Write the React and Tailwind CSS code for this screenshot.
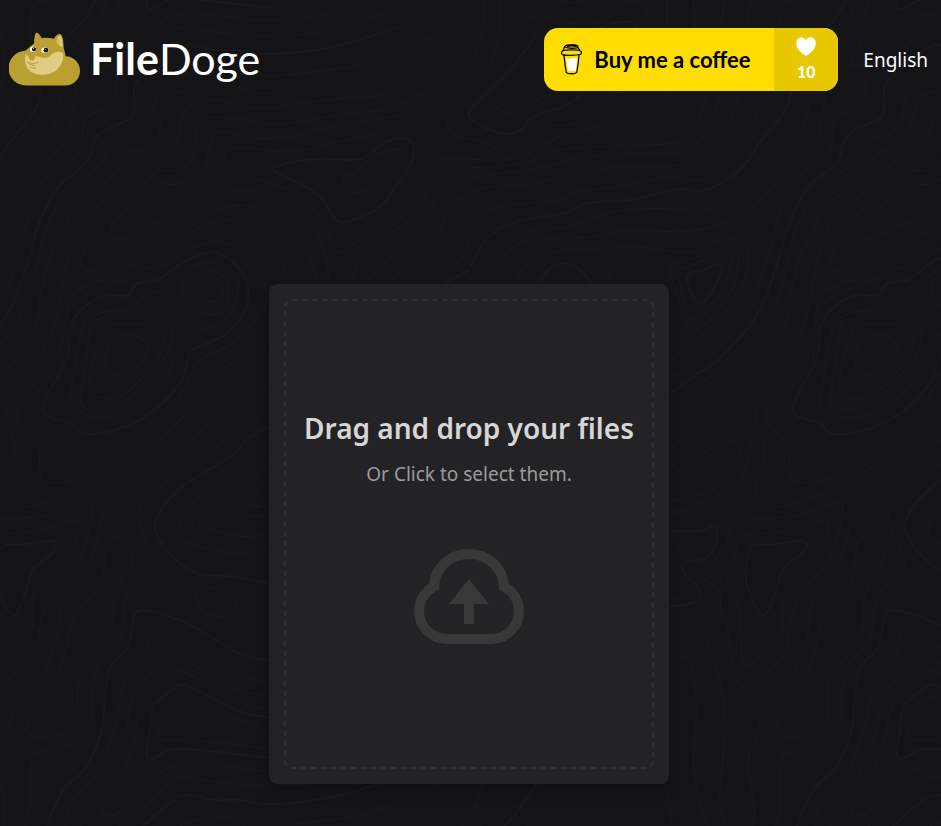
import React, { useState } from 'react';

// Contour lines, grouped by the area of the 750px tile they belong to.
// Points are in thirds of a pixel, a leading "*" means a heavier line and
// a trailing "z" closes the shape.
const areas = [
  {
    x: 0,
    y: 90,
    lines: [
      '55,0 30,50 0,120',
      '*125,0 115,40 85,90 30,155 0,205',
      '184,0 172,70 145,140 90,210 0,300',
      '228,0 215,80 195,160 105,240 60,300 0,363',
      '346,0 348,20 330,45 265,80 248,110 245,165 215,210 150,255 110,300 85,380 65,460 30,570',
      '*402,0 402,60 385,88 305,125 280,160 265,210 230,245 190,275 150,330 110,420 85,510 65,570',
      '485,0 465,30 455,85 425,130 355,148 325,180 300,225 215,295 170,350 130,440 102,570',
      '570,0 515,18 490,70 470,150 430,178 385,187 365,220 330,265 230,350 185,430 150,500 132,570',
      '1190,0 1120,20 1020,25 880,42 800,55 730,48 640,28 580,40 550,75 530,160 500,190 430,215 400,250 370,285 300,340 240,400 210,480 190,570',
      '1290,0 1200,45 1140,62 1040,70 900,95 820,103 740,90 640,82 600,95 588,130 582,190 560,230 530,242 475,242 440,275 330,365 275,440 245,500 242,530 262,542 320,525 450,460 570,410 640,365 720,346 790,360 860,405 920,480 945,560 947,600',
      '1340,0 1240,65 1120,90 970,115 880,140 770,145 730,138 680,125 645,132 628,170 615,240 590,258 530,283 478,282 440,315 350,385 332,420 340,443 370,447 440,412 530,375 640,320 720,300 780,312 880,360 940,415 975,490 990,600',
      '1370,0 1270,65 1170,120 1060,145 980,162 900,183 840,185 760,175 700,172 675,185 680,220 715,260 780,272 860,295 920,330 970,400 1000,465 1025,487 1060,462 1200,385 1230,345 1260,270 1320,212 1410,207',
      '*820,240 870,217 960,207 1080,207 1150,160 1200,143 1240,165 1230,230 1180,300 1140,350 1060,390 1010,390 960,320 900,280 z',
      '1060,250 1120,202 1190,179 1210,190 1180,245 1130,288 1060,308 1030,285 1035,257 z',
      '240,600 350,545 480,485 600,415 680,391 740,405 810,455 850,520 860,600',
      '285,570 365,572 430,540 500,522 580,472 650,455 710,475 770,540 785,570',
      '*395,600 415,577 470,572 560,510 640,487 690,510 730,550 740,570',
      '525,570 560,540 625,514 680,535 715,570',
      '550,570 575,555 630,543 670,555 680,570',
      '595,570 630,560 660,570',
      '1050,600 1080,510 1130,455 1210,405 1260,350 1310,270 1410,237',
      '1090,600 1140,530 1230,460 1280,380 1330,300 1410,267',
      '1150,600 1210,540 1300,460 1330,390 1360,340 1410,312',
      '1260,582 1370,520 1400,470 1410,430',
      '*1330,582 1410,540',
      '1410,18 1350,65 1342,105 1370,140 1410,147',
      '720,-5 770,10 830,8 870,-5',
    ],
  },
  {
    x: 470,
    y: 0,
    lines: [
      '40,0 40,60 30,130 0,195 -60,270',
      '90,0 88,90 60,190 0,260',
      '*340,275 290,315 190,350 160,385 120,402 60,390 0,355 5,325 60,270 130,200 200,100',
      '260,270 200,300 150,340 110,340 75,315 90,290 180,220',
      '0,415 40,425 90,450 150,440 200,405 240,380 310,370 380,330 410,290 450,275',
      '0,478 90,480 170,460 270,410 400,370 500,320 560,300 600,275',
      '0,503 80,500 160,490 270,450 380,440 520,435 620,425 680,370 712,275',
      '0,535 90,520 200,505 320,475 440,462 620,460 680,430 720,380 755,275',
      '0,577 60,560 180,553 300,525 460,500 620,497 680,485 740,440 780,360 808,275',
      '0,690 40,640 120,615 270,600 320,575 440,560 580,532 690,538 760,500 800,450 840,390',
      '*0,800 40,730 100,680 190,655 280,640 360,608 480,600 620,568 700,572 790,525 840,475',
      '0,860 60,770 130,710 220,685 300,680 430,635 560,625 700,630 790,600 840,570',
      '40,870 90,780 160,725 260,715 370,710 480,690 640,695 760,670 840,633',
      '130,870 170,790 250,755 380,748 405,780 430,870',
      '*190,870 240,805 300,792 350,830 370,870',
      '530,860 530,825 440,770 435,748 500,740 594,752',
      '590,0 590,84',
      '670,0 672,84',
      '760,0 755,84',
      '835,0 835,84',
      '140,84 180,55 220,48 280,65 360,73 420,50 450,15 490,5 525,20 537,84',
      '255,0 300,8 345,0',
      '*390,84 430,70 480,65 500,84',
    ],
  },
  {
    x: 0,
    y: 280,
    lines: [
      '30,0 20,30 0,55',
      '*65,0 40,70 0,138',
      '102,0 70,90 30,160 0,188',
      '132,0 118,60 115,110 80,190 40,250 0,282',
      '190,0 175,90 140,190 100,270 50,330 0,360',
      '285,0 220,40 200,90 190,170 165,250 120,300 50,350 18,390 20,430 42,480 42,540 18,600 18,650 40,678 90,680 200,650 320,590 450,500 540,420 600,330 680,260 810,185',
      '375,0 270,40 210,85 200,170 180,260 130,315 60,380 52,420 80,460 115,500 122,590 150,608 220,600 280,570 360,515 450,455 510,395 560,310 600,240 690,195 760,130 797,70 800,30 785,0',
      '*480,0 415,10 380,47 320,45 260,75 215,130 200,240 150,330 127,385 145,410 210,430 240,458 300,460 400,430 470,385 540,310 570,220 600,200 680,160 730,100 745,50 740,0',
      '525,0 490,30 440,42 395,85 310,97 260,120 240,170 225,270 208,370 230,395 300,413 380,395 450,350 500,290 545,185 580,157 660,130 705,80 715,0',
      '290,120 430,105 500,125 515,170 490,240 430,310 380,360 300,390 250,380 242,350 260,230 270,150 z',
      '330,135 450,132 485,150 485,210 430,290 370,345 320,355 275,340 270,290 290,200 305,155 z',
      '380,163 425,175 443,210 420,250 340,287 318,265 322,205 345,170 z',
      '550,0 550,50 590,90 640,104 675,85 685,30 680,0',
      '595,0 580,35 625,65 660,55 668,20 660,0',
      '810,320 740,345 640,420 560,490 440,560 370,610 320,680 290,780 272,840',
      '810,398 740,430 620,525 520,590 430,665 417,720 440,785 465,840',
      '*810,440 750,470 690,530 560,610 490,680 465,740 490,800',
      '810,480 740,520 660,600 570,680 535,745 550,780 620,805 730,820 810,798',
      '810,513 740,570 650,660 600,720 620,745 740,770 810,750',
      '810,550 770,585 695,665 700,695 750,710 810,703',
      '810,585 740,660 750,678 810,678',
      '0,715 120,710 200,690 265,670 278,690 265,760 240,840',
      '0,762 100,755 225,722 235,740 220,800 175,840',
    ],
  },
  {
    x: 0,
    y: 530,
    lines: [
      '*0,60 15,45 80,42 150,32 170,45 150,75 100,115 85,160 60,230 40,256 20,235 0,190',
      '175,90 125,155 100,200 97,290 70,345 0,405',
      '240,90 225,110 160,180 125,260 115,330 90,390 0,464',
      '272,90 235,160 185,220 170,330 120,450 40,550 20,620 0,670',
      '350,23 390,50 397,100 345,190 335,300 290,375 235,460 232,560 200,605 130,621 85,610 85,575 130,500 185,400 225,260 300,165 315,80 325,35 z',
      '465,90 455,135 385,190 372,250 360,330 300,400 275,490 270,590 220,640 120,665 95,690 90,830 75,888 55,930',
      '*490,50 540,100 600,133 700,140 810,160',
      '590,180 625,172 700,195 710,230 690,255 640,257 600,235 z',
      '*810,395 720,370 640,325 550,275 460,245 415,243 400,270 385,350 330,415 315,500 305,600 260,710 190,780 140,888 125,930',
      '810,455 740,445 650,395 480,300 450,303 440,370 370,470 345,590 290,730 215,810 195,888 184,930',
      '810,495 720,480 600,415 510,362 490,370 460,420 400,500 375,610 330,730 260,840 240,888 228,930',
      '810,537 720,520 620,460 530,418 505,435 425,530 400,650 360,740 305,840 320,853 360,845 480,730 550,702 680,710 810,722 1000,700',
      '*810,563 720,545 620,495 550,463 510,485 460,530 450,600 440,675 460,685 520,657 620,662 810,683',
      '810,603 700,565 610,538 550,502 520,525 475,610 490,628 620,635 810,655',
      '346,930 355,888 430,835 540,742 650,757 810,768 1000,750 1150,700',
      '*402,930 410,905 430,888 540,800 640,810 720,810 810,822 1000,800 1200,740',
      '485,930 540,888 640,858 700,868 745,888 900,880 1100,850 1300,770',
      '0,750 12,820 10,888 0,930',
    ],
  },
  {
    x: 668,
    y: 220,
    lines: [
      '*60,165 75,155 100,152 150,133 162,150 140,200 100,250 75,230 58,185 z',
      '30,150 60,142 120,115 185,97 188,130 160,220 110,280 75,298 55,275 35,190 z',
      '5,150 30,128 110,105 200,83 212,110 200,190 150,270 90,330 60,325 40,260 z',
      '0,92 70,95 130,70 200,55 238,85 235,160 190,255 110,340 0,425',
      '246,235 180,340 100,415 0,480',
      '*246,318 150,420 60,480 0,530',
      '246,368 200,420 100,490 0,585',
      '246,462 120,520 0,630',
      '246,540 130,600 0,690',
      '0,745 120,665 200,627 245,645 245,690 210,790 100,845 0,880',
      '0,775 130,685 200,660 222,680 190,760 110,820 0,842',
    ],
  },
  {
    x: 668,
    y: 510,
    lines: [
      '246,27 190,55 170,110 110,190 115,212 155,240 158,300 175,340 200,490 225,533 246,524',
      '246,70 215,85 200,140 178,205 215,310 222,440 235,465 246,465',
      '*246,120 235,150 235,220 246,250',
      '0,10 75,0',
      '*0,65 100,62 140,45 145,100 110,145 50,157 45,185 90,235 90,270 50,285 0,290',
      '0,92 30,92 35,112 0,145',
      '0,190 45,235 40,262 0,265',
      '0,345 40,330 90,350 130,420 160,540 172,670 155,860 172,948',
      '0,450 40,437 70,470 85,590 78,750 90,850 118,948',
      '246,730 241,780 258,880 255,948',
      '0,850 12,948',
    ],
  },
];

const tiles = [
  [0, 0],
  [750, 0],
  [0, -750],
  [750, -750],
  [0, 750],
];

// Smooth curve through all the points of a line
function toPath(line) {
  const closed = line.endsWith('z');
  const pts = line
    .replace(/[*z]/g, '')
    .trim()
    .split(' ')
    .map((p) => p.split(',').map(Number));
  const n = pts.length;
  const at = (i) => (closed ? pts[(i + n) % n] : pts[Math.max(0, Math.min(n - 1, i))]);

  let d = `M${pts[0]}`;
  for (let i = 0; i < (closed ? n : n - 1); i++) {
    const [a, b, c, e] = [at(i - 1), at(i), at(i + 1), at(i + 2)];
    d += `C${b[0] + (c[0] - a[0]) / 6},${b[1] + (c[1] - a[1]) / 6} ${c[0] - (e[0] - b[0]) / 6},${c[1] - (e[1] - b[1]) / 6} ${c}`;
  }
  return d;
}

function Topography() {
  return (
    <svg className="absolute inset-0 w-full h-full pointer-events-none" aria-hidden="true">
      <defs>
        <g id="contours" fill="none" stroke="#19191b">
          {areas.map((area, i) => (
            <g key={i} transform={`translate(${area.x} ${area.y}) scale(0.33333)`}>
              {area.lines.map((line) => (
                <path key={line} d={toPath(line)} strokeWidth={line[0] === '*' ? 6 : 3.5} />
              ))}
            </g>
          ))}
        </g>
      </defs>
      {tiles.map(([x, y]) => (
        <use key={`${x},${y}`} href="#contours" x={x} y={y} />
      ))}
    </svg>
  );
}

function DogeLogo() {
  return (
    <svg viewBox="27 23 213 161" className="w-[71px] h-[54px]" aria-hidden="true">
      <path
        fill="#baa032"
        d="M79 183A52 52 0 0 1 76 79C84 71 94 64 102 57C103 47 103 35 106 27C108 23 113 24 116 28L126 41C137 39 150 40 161 43C166 37 172 29 178 28C184 29 187 36 189 45C191 57 190 68 193 78C195 84 196 89 197 95A44 44 0 0 1 195 183Z"
      />
      <path
        fill="#e0cc82"
        d="M76 88C80 89 82 93 86 99C88 105 93 109 99 108C104 105 105 98 107 94C116 97 126 101 137 100C149 99 152 90 162 85C174 80 189 80 190 93C190 109 184 123 172 134C156 149 129 155 105 148C86 142 74 124 75 103Z"
      />
      <path fill="#e0cc82" d="M170 53C171 44 175 34 181 33C186 40 188 53 187 68C183 65 176 62 170 53Z" />
      <path fill="#baa032" d="M173 56C173 49 175 43 178 40C180 46 181 54 181 61Z" opacity="0.45" />
      <ellipse cx="99" cy="74" rx="9" ry="8" fill="#fff" />
      <ellipse cx="135" cy="77" rx="11" ry="8" fill="#fff" />
      <circle cx="102" cy="74" r="6" fill="#080808" />
      <circle cx="138" cy="77" r="7" fill="#080808" />
      <circle cx="100" cy="72" r="1.5" fill="#fff" />
      <circle cx="136" cy="75" r="1.5" fill="#fff" />
      <path
        d="M83 112C90 118 103 118 115 114M84 115C90 121 96 122 103 123M91 129C96 131 101 131 107 130"
        fill="none"
        stroke="#baa032"
        strokeWidth="3"
        strokeLinecap="round"
      />
    </svg>
  );
}

function CoffeeCup() {
  return (
    <svg viewBox="34 30 64 94" className="w-[21px] h-[31px]" aria-hidden="true">
      <path d="M49 67L84 65L79 112L56 113Z" fill="#fff" />
      <path d="M49 64L85 63L83 74C70 69 60 77 50 74Z" fill="#ffdd00" />
      <g fill="none" stroke="#0d0c22" strokeWidth="4" strokeLinecap="round" strokeLinejoin="round">
        <path d="M43 62C45 82 47 101 50 116C55 122 77 122 82 116C85 101 88 80 89 62" />
        <path d="M38 51C47 47 86 46 94 51C97 54 97 59 94 61C82 65 49 66 38 62C35 60 35 54 38 51Z" />
        <path d="M41 49C42 45 43 42 45 39C52 43 74 44 86 41L91 49" />
        <path d="M45 38C48 33 60 32 69 32C80 32 86 35 86 39M54 37C62 35 72 35 80 38" />
      </g>
    </svg>
  );
}

function UploadIcon() {
  return (
    <svg viewBox="42 42 330 285" className="w-[110px] h-[95px]" aria-hidden="true">
      <path
        d="M103 154A104 97 0 0 1 311 154A84 84 0 0 1 357 228A84 84 0 0 1 273 312H141A84 84 0 0 1 57 228A84 84 0 0 1 103 154Z"
        fill="none"
        stroke="#383838"
        strokeWidth="30"
      />
      <path d="M207 132L267 207H222V267H192V207H147Z" fill="#383838" />
    </svg>
  );
}

function Header() {
  return (
    <header className="flex items-start justify-between pt-7 pl-[9px] pr-[10px]">
      <a href="#home" className="flex items-center gap-[10px] text-white h-[62px]">
        <DogeLogo />
        <span className="font-['Lato',sans-serif] text-[43px] leading-[54px]">
          <span className="font-bold">File</span>Doge
        </span>
      </a>
      <div className="flex items-center gap-[25px]">
        <a
          href="#coffee"
          className="flex h-[63px] rounded-[14px] overflow-hidden bg-[#ffdd00] font-['Lato',sans-serif]"
        >
          <span className="flex items-center gap-3 w-[230px] pl-[17px] whitespace-nowrap text-[22px] font-bold text-black">
            <CoffeeCup />
            Buy me a coffee
          </span>
          <span className="flex flex-col items-center w-16 pt-[9px] bg-[#e6c700] text-white">
            <svg viewBox="0 0 20 19" className="w-5 h-[19px]" fill="currentColor" aria-hidden="true">
              <path d="M10 3C8 0 5 0 3.5 0.8C0.5 2.2-0.3 5.5 0.5 8.5C1.7 13 6 16.5 10 19C14 16.5 18.3 13 19.5 8.5C20.3 5.5 19.5 2.2 16.5 0.8C15 0 12 0 10 3Z" />
            </svg>
            <span className="mt-1 text-base leading-6 font-black">10</span>
          </span>
        </a>
        <button type="button" className="text-white text-[19px] leading-6">
          English
        </button>
      </div>
    </header>
  );
}

export default function App() {
  const [files, setFiles] = useState([]);

  const handleDrop = (e) => {
    e.preventDefault();
    setFiles([...e.dataTransfer.files]);
  };

  return (
    <div className="relative min-h-screen overflow-hidden bg-[#141416] font-['Noto_Sans',sans-serif]">
      <Topography />
      <div className="relative pr-[3px]">
        <Header />
        <main className="flex justify-center mt-[193px] pb-10">
          <label
            onDragOver={(e) => e.preventDefault()}
            onDrop={handleDrop}
            className="flex w-[400px] h-[500px] p-[15px] rounded-lg bg-[#232325] shadow-lg cursor-pointer"
          >
            <span className="flex flex-col flex-1 items-center border-2 border-dashed border-[#303032] rounded-lg pt-[106px]">
              <span className="text-[28px] leading-[42px] font-semibold text-[#d6d6d6] whitespace-nowrap">
                Drag and drop your files
              </span>
              <span className="mt-[10px] mb-[59px] text-[19px] leading-[31px] text-[#9b9b9b]">
                {files.length > 0 ? `${files.length} selected` : 'Or Click to select them.'}
              </span>
              <UploadIcon />
            </span>
            <input type="file" multiple className="sr-only" onChange={(e) => setFiles([...e.target.files])} />
          </label>
        </main>
      </div>
    </div>
  );
}
